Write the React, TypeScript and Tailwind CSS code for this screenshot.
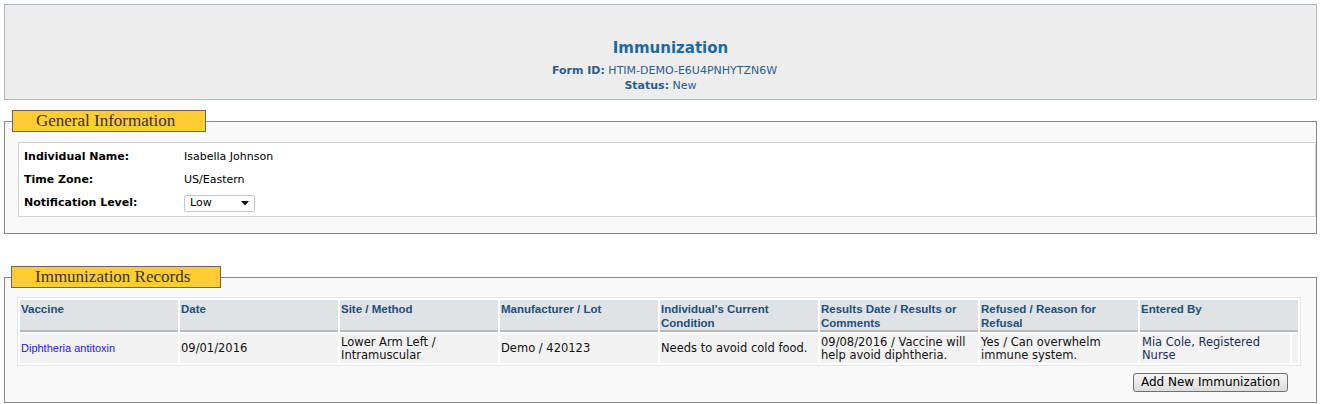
const SANS = "font-['DejaVu_Sans','Verdana',sans-serif]";

const columns = [
  "Vaccine",
  "Date",
  "Site / Method",
  "Manufacturer / Lot",
  "Individual's Current Condition",
  "Results Date / Results or Comments",
  "Refused / Reason for Refusal",
  "Entered By",
];

function Legend({ children }: { children: React.ReactNode }) {
  return (
    <legend className="-ml-[6px] h-[22px] border border-[#666] bg-[#ffcc33] pl-[23px] pr-[30px] font-['Liberation_Serif',serif] text-[17px] leading-[20px] text-[#333]">
      {children}
    </legend>
  );
}

export default function App() {
  return (
    <div className={`${SANS} min-h-[404px] bg-white pt-[4px] text-[11px]`}>
      <header className="mx-[4px] flex h-[96px] flex-col items-center border border-[#a9b8c7] bg-[#ededed] pt-[33px] text-[#2b5d8e]">
        <h1 className="ml-[20px] text-[15px] font-bold leading-[20px] text-[#1b6aa3]">Immunization</h1>
        <p className="ml-[8px] mt-[5px] leading-[15px]">
          <span className="font-bold">Form ID:</span> HTIM-DEMO-E6U4PNHYTZN6W
        </p>
        <p className="leading-[16px]">
          <span className="font-bold">Status:</span> New
        </p>
      </header>

      <fieldset className="mx-[4px] mt-[10px] border border-[#888] bg-[#f9f9f9] pb-[16px] pl-[13px]">
        <Legend>General Information</Legend>
        <div className="mt-[10px] border border-[#d4d4d4] bg-white pb-[1px] pl-[5px] pt-[3px] text-black">
          <div className="grid grid-cols-[160px_1fr]">
            <div className="flex h-[23px] items-center font-bold">Individual Name:</div>
            <div className="flex h-[23px] items-center">Isabella Johnson</div>
            <div className="flex h-[23px] items-center font-bold">Time Zone:</div>
            <div className="flex h-[23px] items-center">US/Eastern</div>
            <div className="flex h-[23px] items-center font-bold">Notification Level:</div>
            <div className="flex h-[23px] items-center">
              <div className="flex h-[17px] w-[71px] items-center justify-between rounded-[2px] border border-[#c4c8cc] bg-white pl-[5px] pr-[5px]">
                <span>Low</span>
                <svg width="8" height="5" viewBox="0 0 8 5">
                  <path d="M0 0 L8 0 L4 4.5 Z" fill="#111" />
                </svg>
              </div>
            </div>
          </div>
        </div>
      </fieldset>

      <fieldset className="mx-[4px] mt-[32px] border border-[#888] bg-[#f9f9f9] pb-[10px] pl-[12px]">
        <Legend>Immunization Records</Legend>
        <table className="mt-[9px] table-fixed border-separate border-spacing-[2px] border border-[#e6e6e6] bg-white">
          <colgroup>
            {[0, 1, 2, 3, 4, 5, 6].map((i) => (
              <col key={i} className="w-[158px]" />
            ))}
            <col className="w-[150px]" />
            <col className="w-[6px]" />
          </colgroup>
          <thead>
            <tr>
              {columns.map((c, i) => (
                <th
                  key={c}
                  colSpan={i === 7 ? 2 : 1}
                  className="h-[32px] border-b-2 border-[#b9b9b9] bg-[#dfe3e6] pl-[1px] pr-[4px] pt-[2px] text-left align-top font-['Liberation_Sans',Arial,sans-serif] text-[11.5px] font-bold leading-[14px] text-[#1d4f7c]"
                >
                  {c}
                </th>
              ))}
            </tr>
          </thead>
          <tbody>
            <tr className="text-[11.5px] leading-[13px] text-[#111]">
              <td className="h-[29px] bg-[#f2f2f2] pl-[1px] font-['Liberation_Sans',Arial,sans-serif] text-[11px] text-[#1a1aee]">
                Diphtheria antitoxin
              </td>
              <td className="bg-[#f2f2f2] pl-[1px]">09/01/2016</td>
              <td className="bg-[#f2f2f2] pl-[1px]">Lower Arm Left / Intramuscular</td>
              <td className="bg-[#f2f2f2] pl-[1px]">Demo / 420123</td>
              <td className="bg-[#f2f2f2] pl-[1px]">Needs to avoid cold food.</td>
              <td className="bg-[#f2f2f2] pl-[1px]">09/08/2016 / Vaccine will help avoid diphtheria.</td>
              <td className="bg-[#f2f2f2] pl-[1px]">Yes / Can overwhelm immune system.</td>
              <td className="bg-[#f2f2f2] pl-[2px] text-[#1b2f5a]">Mia Cole, Registered Nurse</td>
              <td className="bg-[#f2f2f2]"></td>
            </tr>
          </tbody>
        </table>
        <div className="flex w-[1284px] justify-end pr-[13px] pt-[7px]">
          <button className="h-[19px] w-[155px] rounded-[3px] border border-[#707070] bg-gradient-to-b from-[#f6f6f6] to-[#dcdcdc] text-[12px] leading-[17px] text-black">
            Add New Immunization
          </button>
        </div>
      </fieldset>
    </div>
  );
}
